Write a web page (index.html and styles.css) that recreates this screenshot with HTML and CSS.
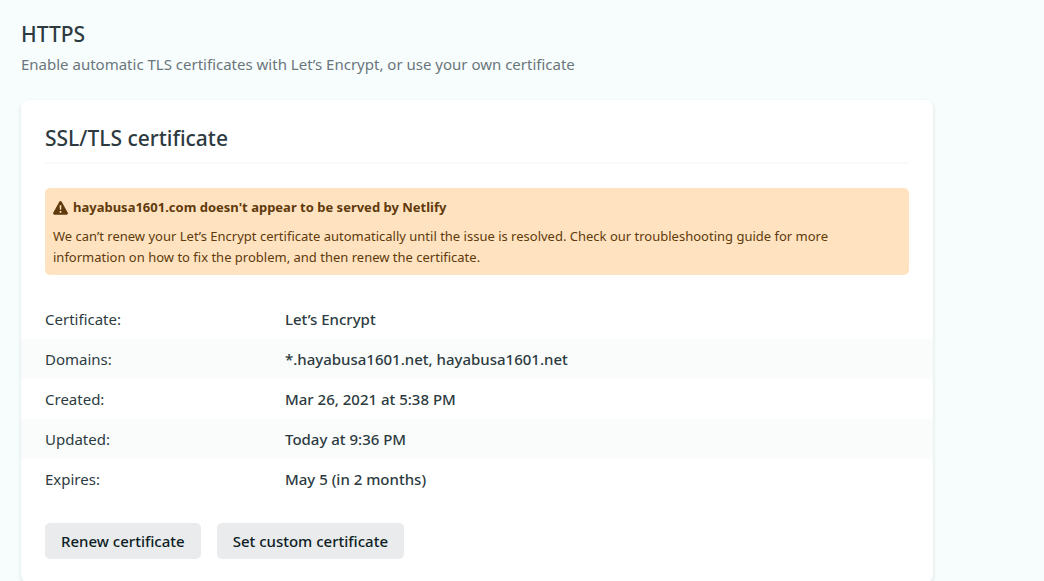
FILE: index.html
```html
<!DOCTYPE html>
<html lang="en">
<head>
<meta charset="utf-8">
<meta name="viewport" content="width=device-width, initial-scale=1">
<title>HTTPS</title>
<link rel="stylesheet" href="styles.css">
</head>
<body>
<main class="page">
  <header class="page-header">
    <h1 class="heading">HTTPS</h1>
    <p class="subtitle">Enable automatic TLS certificates with Let’s Encrypt, or use your own certificate</p>
  </header>
  <section class="card">
    <h2 class="heading card-title">SSL/TLS certificate</h2>
    <div class="alert" role="alert">
      <h3 class="alert-title">
        <svg class="alert-icon" viewBox="0 0 14 13" aria-hidden="true">
          <path fill="currentColor" fill-rule="evenodd" d="M5.9.7a1.25 1.25 0 0 1 2.2 0l5.600 10.100A1.250 1.250 0 0 1 12.600 12.700H1.400A1.250 1.250 0 0 1 .3 10.800ZM6.200 4l.2 4.200h1.200L7.800 4Zm0 5.400v1.500h1.600V9.400Z"/>
        </svg>
        <span>hayabusa1601.com doesn't appear to be served by Netlify</span>
      </h3>
      <p class="alert-text">We can’t renew your Let’s Encrypt certificate automatically until the issue is resolved. Check our troubleshooting guide for more information on how to fix the problem, and then renew the certificate.</p>
    </div>
    <table class="details">
      <tbody>
        <tr><th scope="row">Certificate:</th><td>Let’s Encrypt</td></tr>
        <tr><th scope="row">Domains:</th><td>*.hayabusa1601.net, hayabusa1601.net</td></tr>
        <tr><th scope="row">Created:</th><td>Mar 26, 2021 at 5:38 PM</td></tr>
        <tr><th scope="row">Updated:</th><td>Today at 9:36 PM</td></tr>
        <tr><th scope="row">Expires:</th><td>May 5 (in 2 months)</td></tr>
      </tbody>
    </table>
    <div class="actions">
      <button class="button" type="button">Renew certificate</button>
      <button class="button" type="button">Set custom certificate</button>
    </div>
  </section>
</main>
</body>
</html>
```
FILE: styles.css
```css
* {
  box-sizing: border-box;
}

body {
  margin: 0;
  background: #f7fdfd;
  color: #2d3b41;
  font-family: "Noto Sans", "Open Sans", sans-serif;
  font-size: 15px;
  line-height: 24px;
}

h1, h2, h3, p {
  margin: 0;
}

.page {
  max-width: 954px;
  padding: 20px 21px 0;
}

.page-header {
  margin-bottom: 24px;
}

.heading {
  font-size: 21px;
  font-weight: 500;
  line-height: 28px;
}

.subtitle {
  margin-top: 4px;
  color: #6a767c;
}

.card {
  padding: 24px;
  border-radius: 8px;
  background: #fff;
  box-shadow: 0 2px 4px rgba(14, 30, 37, 0.12);
}

.card-title {
  padding-bottom: 10px;
  border-bottom: 2px solid #f9fafa;
}

.alert {
  margin: 24px 0;
  padding: 9px 8px 7px;
  border-radius: 5px;
  background: #ffe3c0;
  color: #603a0c;
  font-size: 13px;
  line-height: 21px;
}

.alert-title {
  display: flex;
  align-items: center;
  gap: 5px;
  margin-bottom: 8px;
  font-size: 13px;
  font-weight: 700;
}

.alert-icon {
  width: 15px;
  height: 14px;
}

.alert-text {
  padding-right: 16px;
}

.details {
  width: calc(100% + 48px);
  margin: 0 -24px;
  border-collapse: collapse;
  table-layout: fixed;
}

.details tr:nth-child(even) {
  background: #fafbfb;
}

.details th,
.details td {
  padding: 8px 0;
  text-align: left;
}

.details th {
  width: 264px;
  padding-left: 24px;
  font-weight: 400;
}

.details td {
  padding-right: 24px;
  font-weight: 500;
}

.actions {
  display: flex;
  flex-wrap: wrap;
  gap: 16px;
  margin-top: 24px;
}

.button {
  padding: 6px 16px;
  border: 0;
  border-radius: 5px;
  background: #e9ebed;
  color: #0e1e25;
  font: inherit;
  font-weight: 500;
  cursor: pointer;
}
```
